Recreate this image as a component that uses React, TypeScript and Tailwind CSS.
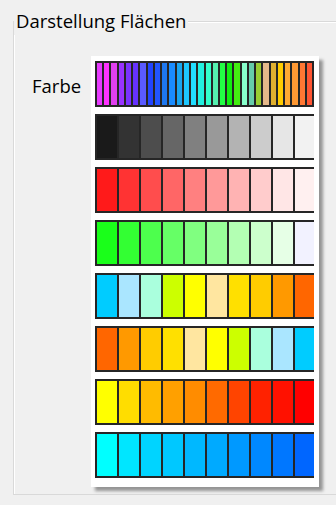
import React from "react";

const rainbow = [
  "#e83aff", "#ff33ff", "#e040f0", "#9933ff", "#7a33ff", "#6633ff",
  "#5a5aff", "#2244ff", "#2255ff", "#1e78f0", "#1a8cff", "#19a6f0",
  "#1ec8ff", "#22ddff", "#22f0e0", "#33ffcc", "#55f0b0", "#22ff44",
  "#11ee11", "#44ee11", "#88ffcc", "#66ccaa", "#99cc33", "#e6b88a",
  "#e0b030", "#ffcc00", "#ffaa33", "#ff9933", "#ff7733", "#ff5533",
];

const rows: string[][] = [
  ["#1a1a1a", "#333333", "#4d4d4d", "#666666", "#808080", "#999999", "#b3b3b3", "#cccccc", "#e6e6e6", "#f2f2f2"],
  ["#ff1a1a", "#ff3333", "#ff4d4d", "#ff6666", "#ff8080", "#ff9999", "#ffb3b3", "#ffcccc", "#ffe6e6", "#fff0f0"],
  ["#1aff1a", "#33ff33", "#4dff4d", "#66ff66", "#80ff80", "#99ff99", "#b3ffb3", "#ccffcc", "#e6ffe6", "#f2f2ff"],
  ["#00ccff", "#aae6ff", "#aaffdd", "#ccff00", "#ffff00", "#ffe6a0", "#ffe000", "#ffcc00", "#ff9900", "#ff6600"],
  ["#ff6600", "#ff9900", "#ffcc00", "#ffe000", "#ffe6a0", "#ffff00", "#ccff00", "#aaffdd", "#aae6ff", "#00ccff"],
  ["#ffff00", "#ffdd00", "#ffbb00", "#ffa000", "#ff8c00", "#ff6a00", "#ff4400", "#ff2200", "#ff1100", "#ff0000"],
  ["#00ffff", "#00e6ff", "#00d4ff", "#00c8ff", "#00b8ff", "#00aaff", "#0099ff", "#0088ff", "#0077ff", "#0066ff"],
];

export default function App() {
  return (
    <div
      className="w-[336px] h-[505px] bg-[#f0f0f0] pt-[21px] pl-[13px] overflow-hidden text-black"
      style={{ fontFamily: '"Open Sans", "Noto Sans", sans-serif' }}
    >
      <div className="relative h-[474px] border-l border-t border-b border-[#d9d9d9] shadow-[inset_1px_1px_0_#ffffff]">
        <span className="absolute left-0 top-[-14.5px] px-[2px] bg-[#f0f0f0] text-[18.5px] leading-[25px] pb-[2px]">
          Darstellung Flächen
        </span>
        <div className="flex items-start pt-[34px] pl-[18px]">
          <div className="w-[59px] mt-[16.5px] text-[18.5px] leading-[25px]">Farbe</div>
          <div className="w-[228px] h-[431px] bg-white pl-[4px] pt-[5px] flex flex-col gap-[7px] shadow-[4px_4px_3px_rgba(0,0,0,0.38)]">
            <div className="w-[219px] h-[46px] border-2 border-[#262626] flex">
              {rainbow.map((c, i) => (
                <div
                  key={i}
                  className={i === 0 ? "flex-1" : "flex-1 border-l-2 border-[#262626]"}
                  style={{ backgroundColor: c }}
                />
              ))}
            </div>
            {rows.map((row, ri) => (
              <div key={ri} className="w-[219px] h-[46px] flex overflow-hidden">
                {row.map((c, i) => (
                  <div
                    key={i}
                    className="w-[22px] h-[46px] shrink-0 border-l-2 border-y-2 border-[#262626]"
                    style={{ backgroundColor: c }}
                  />
                ))}
              </div>
            ))}
          </div>
        </div>
      </div>
    </div>
  );
}
